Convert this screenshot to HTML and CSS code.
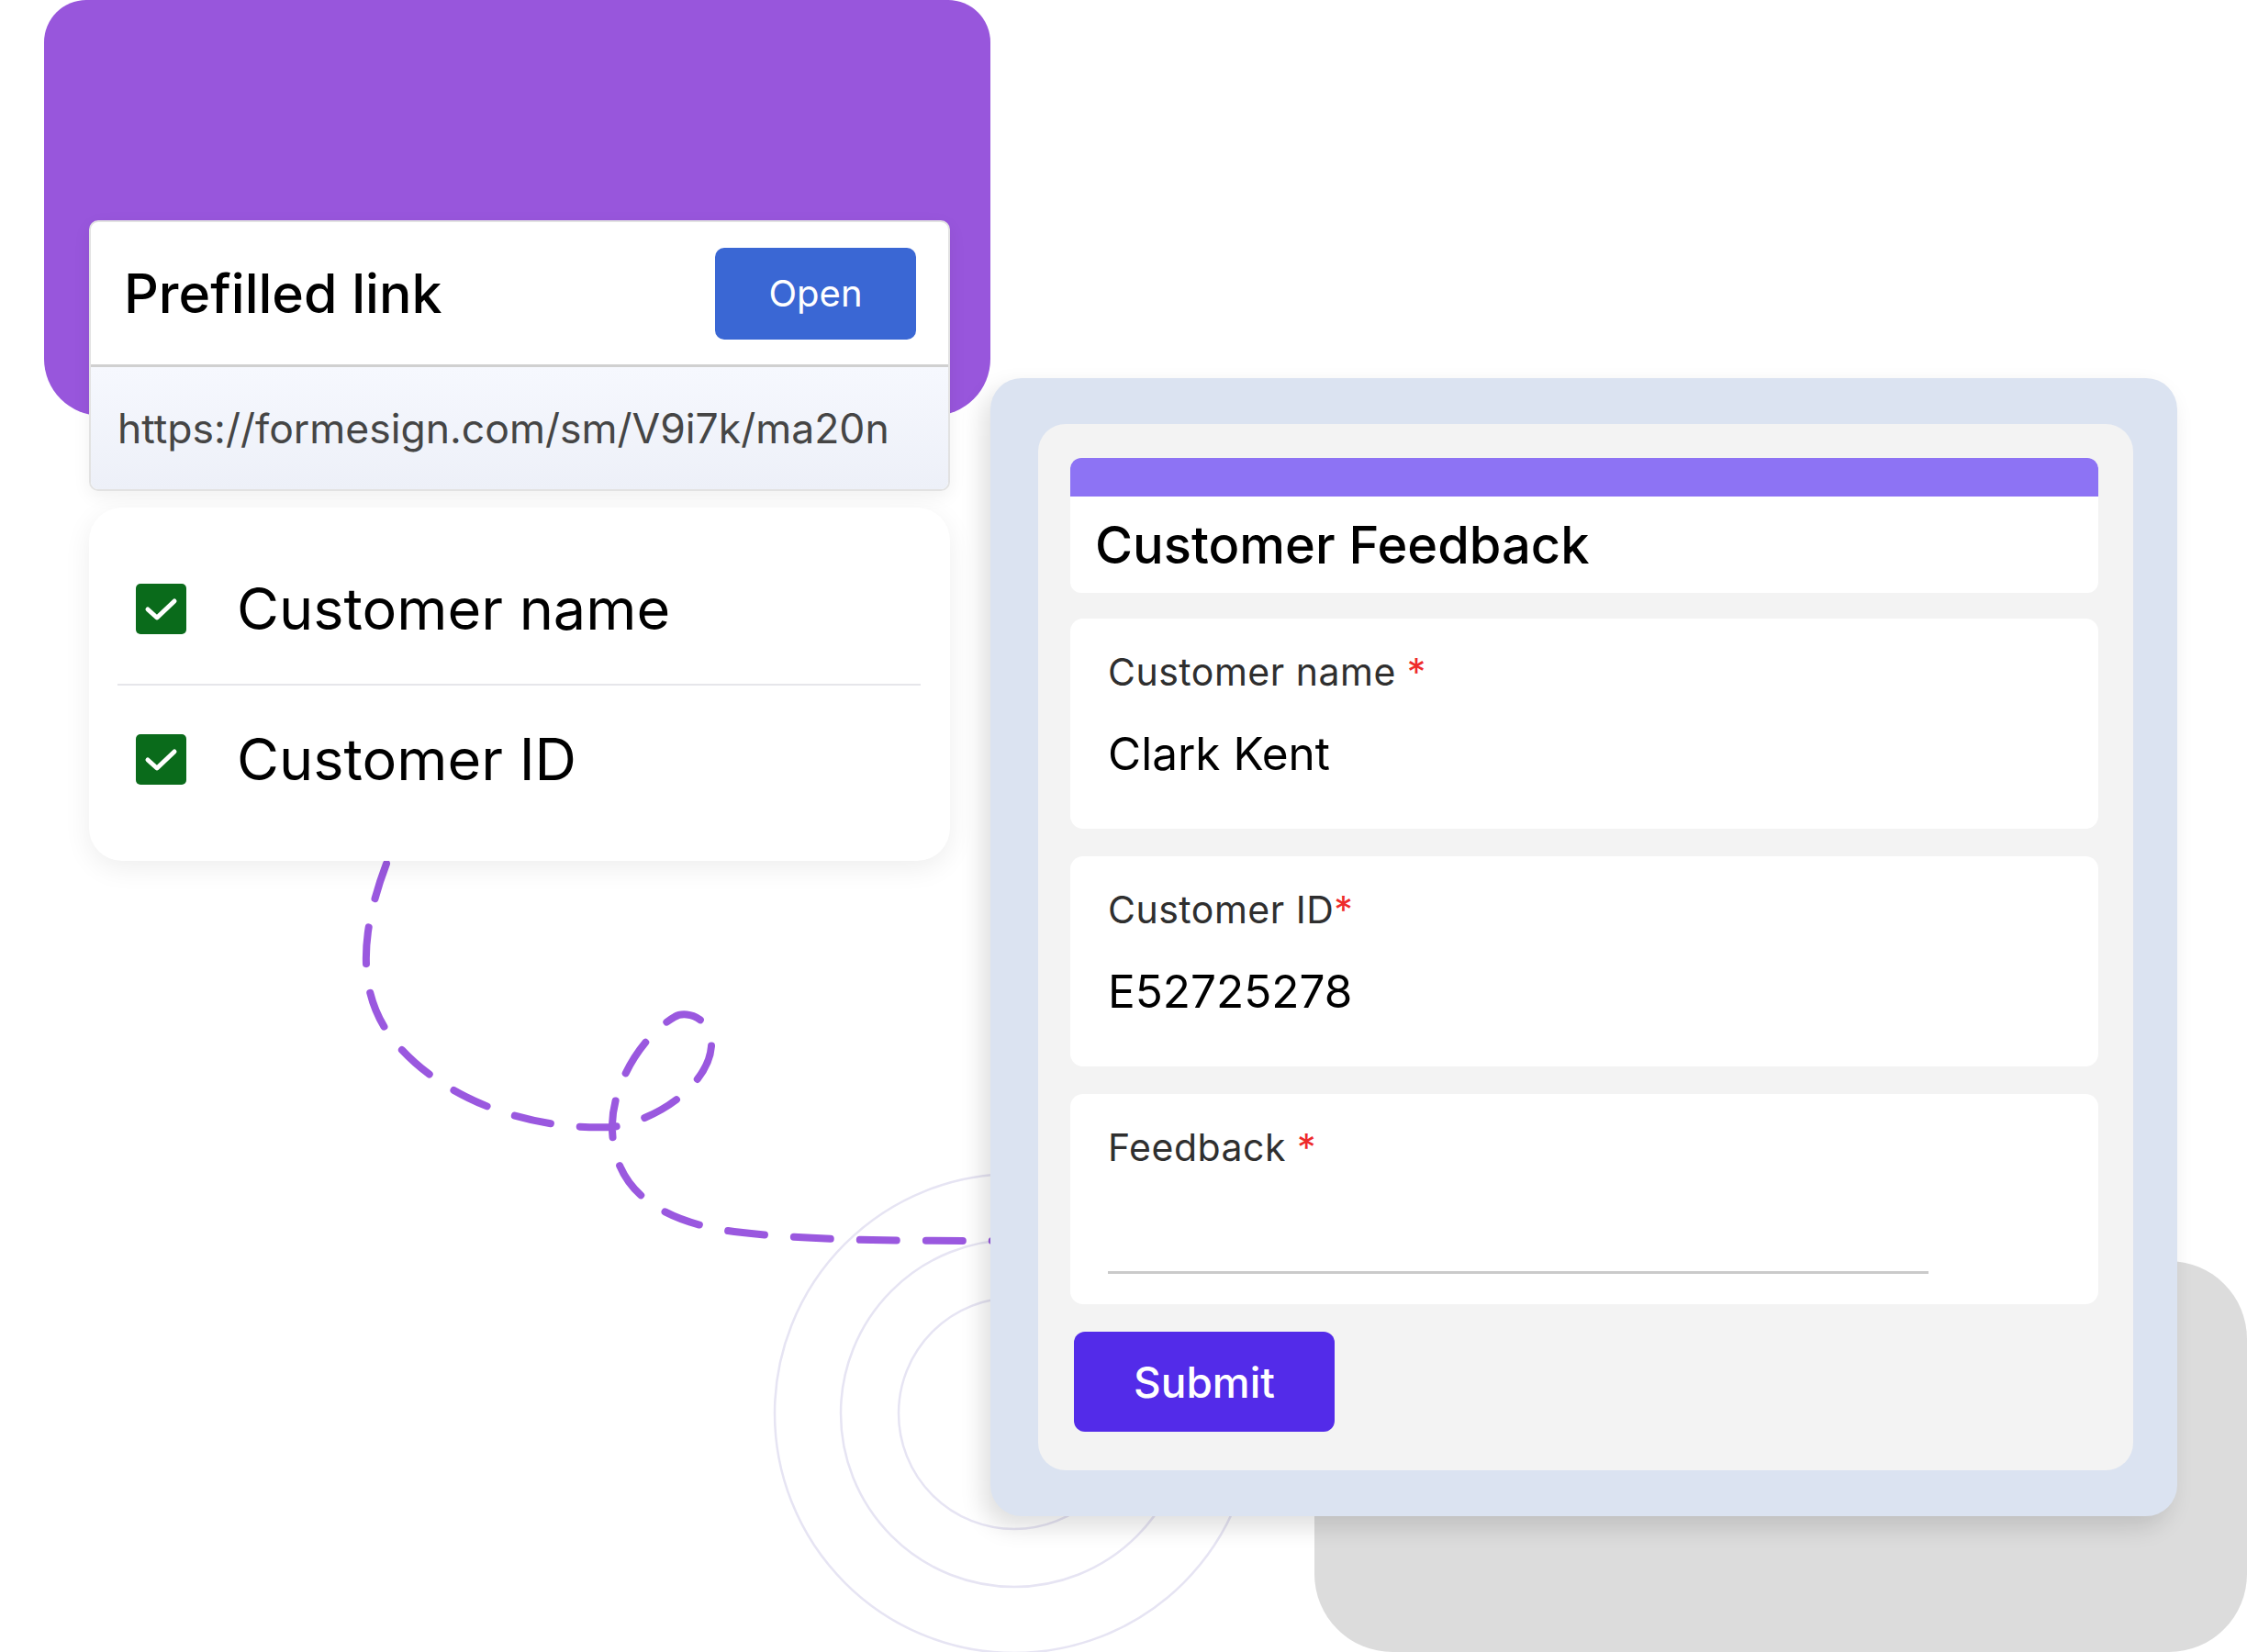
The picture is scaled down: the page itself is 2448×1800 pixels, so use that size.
FILE: index.html
```html
<!DOCTYPE html>
<html lang="en">
<head>
    <meta charset="UTF-8">
    <meta name="viewport" content="width=device-width, initial-scale=1.0">
    <title>Prefilled link</title>
    <link rel="stylesheet" href="styles.css">
</head>
<body>
    <div class="scene">
        <svg class="decor" width="2448" height="1800" viewBox="0 0 2448 1800">
            <circle cx="1105" cy="1540" r="126" class="ring"/>
            <circle cx="1105" cy="1540" r="189" class="ring"/>
            <circle cx="1105" cy="1540" r="261" class="ring"/>
            <path class="dash" d="M 421 941 C 395 1010, 385 1080, 430 1135 C 480 1195, 570 1232, 667 1228 C 720 1220, 772 1180, 775 1140 C 777 1110, 748 1100, 735 1108 C 700 1128, 668 1180, 667 1225 C 666 1290, 710 1330, 800 1342 C 880 1352, 980 1352, 1090 1352"/>
        </svg>
        <div class="purple-block"></div>
        <div class="gray-block"></div>

        <div class="left-col">
            <div class="link-card">
                <div class="link-head">
                    <h2 class="link-title">Prefilled link</h2>
                    <button class="open-btn">Open</button>
                </div>
                <div class="link-url">https://formesign.com/sm/V9i7k/ma20n</div>
            </div>

            <div class="fields-card">
                <div class="check-row">
                    <span class="checkbox">
                        <svg width="55" height="55" viewBox="0 0 55 55"><path d="M13 28 L23 37 L42 19"/></svg>
                    </span>
                    <span class="check-label">Customer name</span>
                </div>
                <div class="check-row">
                    <span class="checkbox">
                        <svg width="55" height="55" viewBox="0 0 55 55"><path d="M13 28 L23 37 L42 19"/></svg>
                    </span>
                    <span class="check-label">Customer ID</span>
                </div>
            </div>
        </div>

        <div class="form-panel">
            <div class="form-inner">
                <div class="form-head">
                    <div class="form-stripe"></div>
                    <h1 class="form-title">Customer Feedback</h1>
                </div>
                <div class="field">
                    <div class="field-label">Customer name <span class="req">*</span></div>
                    <div class="field-value">Clark Kent</div>
                </div>
                <div class="field">
                    <div class="field-label">Customer ID<span class="req">*</span></div>
                    <div class="field-value">E52725278</div>
                </div>
                <div class="field">
                    <div class="field-label">Feedback <span class="req">*</span></div>
                    <div class="field-line"></div>
                </div>
                <button class="submit-btn">Submit</button>
            </div>
        </div>
    </div>
</body>
</html>
```

FILE: styles.css
```css
body {
    margin: 0;
    background-color: #ffffff;
    font-family: Inter, "Noto Sans", sans-serif;
    color: #000;
}
.scene {
    position: relative;
    display: flex;
    align-items: flex-start;
    width: 2448px;
    height: 1800px;
    overflow: hidden;
}
.decor {
    position: absolute;
    left: 0;
    top: 0;
    z-index: 1;
}
.ring {
    fill: none;
    stroke: #e6e4f3;
    stroke-width: 2.5;
}
.dash {
    fill: none;
    stroke: #9a58df;
    stroke-width: 8;
    stroke-linecap: round;
    stroke-dasharray: 40 32;
}
.purple-block {
    position: absolute;
    left: 48px;
    top: 0;
    width: 1031px;
    height: 453px;
    background-color: #9856dc;
    border-radius: 46px 46px 62px 62px;
    z-index: 1;
}
.gray-block {
    position: absolute;
    left: 1432px;
    top: 1374px;
    width: 1016px;
    height: 426px;
    background-color: #dcdcdc;
    border-radius: 85px;
    z-index: 0;
}

/* left column */
.left-col {
    position: relative;
    z-index: 2;
    display: flex;
    flex-direction: column;
    gap: 18px;
    width: 938px;
    margin-left: 97px;
    padding-top: 240px;
}
.link-card {
    background-color: white;
    border: 2px solid #e2e2e2;
    border-radius: 10px;
    overflow: hidden;
    box-shadow: 0 6px 20px rgba(0,0,0,0.06);
}
.link-head {
    display: flex;
    align-items: center;
    justify-content: space-between;
    height: 155px;
    padding: 0 35px 0 36px;
    border-bottom: 3px solid #d0d0d0;
}
.link-title {
    margin: 0;
    font-size: 59px;
    font-weight: 500;
}
.open-btn {
    width: 219px;
    height: 100px;
    background-color: #3a67d4;
    color: white;
    border: none;
    border-radius: 10px;
    font-family: Inter, sans-serif;
    font-size: 40px;
}
.link-url {
    height: 133px;
    display: flex;
    align-items: center;
    padding-left: 29px;
    font-size: 44.5px;
    color: #454545;
    background: linear-gradient(#f6f8fe, #edf0f8);
}
.fields-card {
    background-color: white;
    border-radius: 36px;
    padding: 28px 32px 31px 31px;
    box-shadow: 0 8px 30px rgba(0,0,0,0.07);
}
.check-row {
    display: flex;
    align-items: center;
    gap: 55px;
    height: 164px;
    padding-left: 20px;
}
.check-row + .check-row {
    height: 160px;
    border-top: 2px solid #e6e6ea;
}
.checkbox {
    width: 55px;
    height: 55px;
    background-color: #0a6b1b;
    border-radius: 5px;
}
.checkbox svg {
    display: block;
}
.checkbox path {
    fill: none;
    stroke: white;
    stroke-width: 5;
    stroke-linecap: round;
    stroke-linejoin: round;
}
.check-label {
    font-size: 63px;
}

/* form panel */
.form-panel {
    position: relative;
    z-index: 2;
    width: 1293px;
    margin-left: 44px;
    margin-top: 412px;
    padding: 50px 48px 50px 52px;
    box-sizing: border-box;
    background-color: #dbe3f1;
    border-radius: 34px;
    box-shadow: -8px 12px 26px rgba(0,0,0,0.13);
}
.form-inner {
    background-color: #f3f3f3;
    border-radius: 30px;
    padding: 37px 38px 42px 35px;
    display: flex;
    flex-direction: column;
    gap: 30px;
}
.form-head {
    background-color: white;
    border-radius: 12px;
    overflow: hidden;
    margin-bottom: -2px;
}
.form-stripe {
    height: 42px;
    background-color: #8d73f4;
}
.form-title {
    margin: 0;
    height: 105px;
    display: flex;
    align-items: center;
    padding-left: 27px;
    font-size: 56px;
    font-weight: 500;
}
.field {
    background-color: white;
    border-radius: 14px;
    height: 229px;
    box-sizing: border-box;
    padding: 34px 41px 0;
}
.field-label {
    font-size: 41px;
    letter-spacing: 0.5px;
    line-height: 49px;
    color: #2f2f2f;
}
.req {
    color: #ee2a2a;
}
.field-value {
    margin-top: 35px;
    font-size: 49.5px;
    line-height: 59px;
}
.field-line {
    margin-top: 110px;
    width: 894px;
    height: 3px;
    background-color: #cacaca;
}
.submit-btn {
    align-self: flex-start;
    width: 284px;
    height: 109px;
    margin-left: 4px;
    background-color: #532be9;
    color: white;
    border: none;
    border-radius: 12px;
    font-family: Inter, sans-serif;
    font-size: 46px;
    font-weight: 500;
}
```
